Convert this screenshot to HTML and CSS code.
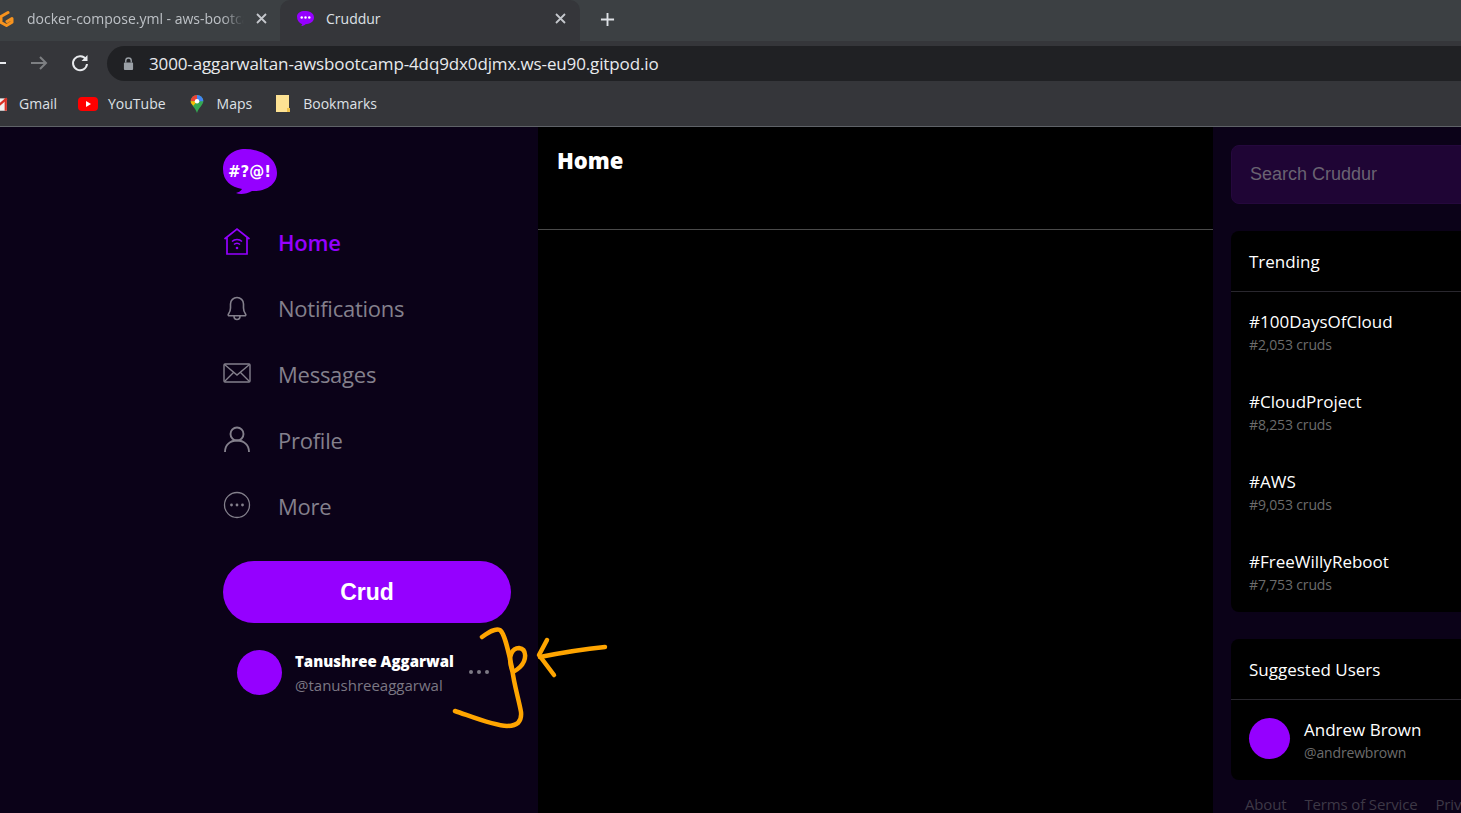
FILE: index.html
```html
<!DOCTYPE html>
<html lang="en">
  <head>
    <meta charset="UTF-8" />
    <meta name="viewport" content="width=device-width, initial-scale=1.0" />
    <title>Cruddur</title>
    <link rel="stylesheet" href="styles.css">
  </head>
  <body>
    <!-- browser chrome -->
    <div class="tabstrip">
      <div class="tab tab-inactive">
        <svg class="favicon" viewBox="0 0 18 20"><path d="M11 3.500 4 7.500v6l5.500 3 5.500-3.200V9.500l-5 3" fill="none" stroke="#f7931e" stroke-width="3" stroke-linecap="round" stroke-linejoin="round"/></svg>
        <span class="tab-title">docker-compose.yml - aws-bootcamp</span>
        <svg class="tab-close" viewBox="0 0 11 11"><path d="M1 1l9 9M10 1l-9 9" stroke="#c4c7cc" stroke-width="1.800" fill="none"/></svg>
      </div>
      <div class="tab tab-active">
        <svg class="favicon" viewBox="0 0 20 18"><path d="M1 7C1 3 5 1 9 1c5 0 10 2 10 7 0 5-5 7-9 7-1 1-3 2-5 2 1-.5 1.500-1 1.500-2C3 14 1 11 1 7Z" fill="#9500ff"/><circle cx="6" cy="8" r="1.300" fill="#fff"/><circle cx="10" cy="8" r="1.300" fill="#fff"/><circle cx="14" cy="8" r="1.300" fill="#fff"/></svg>
        <span class="tab-title">Cruddur</span>
        <svg class="tab-close" viewBox="0 0 11 11"><path d="M1 1l9 9M10 1l-9 9" stroke="#c4c7cc" stroke-width="1.800" fill="none"/></svg>
      </div>
      <svg class="new-tab" viewBox="0 0 16 16"><path d="M8 1v14M1 8h14" stroke="#dee1e6" stroke-width="2" fill="none"/></svg>
    </div>
    <div class="toolbar">
      <svg class="tool-icon tool-back" viewBox="0 0 20 20"><path d="M18 10H3M9 4l-6 6 6 6" fill="none" stroke="#e8eaed" stroke-width="2"/></svg>
      <svg class="tool-icon tool-forward" viewBox="0 0 20 20"><path d="M2 10h15M11 4l6 6-6 6" fill="none" stroke="#7d7f82" stroke-width="2"/></svg>
      <svg class="tool-icon tool-reload" viewBox="0 0 20 20"><path d="M16 6.500A7 7 0 1 0 17 11" fill="none" stroke="#e8eaed" stroke-width="2"/><path d="M17.500 2v6h-6Z" fill="#e8eaed"/></svg>
      <div class="omnibox">
        <svg class="lock" viewBox="0 0 12 14"><path d="M3 6V4a3 3 0 0 1 6 0v2" fill="none" stroke="#9aa0a6" stroke-width="1.500"/><rect x="1" y="6" width="10" height="8" rx="1" fill="#9aa0a6"/></svg>
        <span class="url">3000-aggarwaltan-awsbootcamp-4dq9dx0djmx.ws-eu90.gitpod.io</span>
      </div>
    </div>
    <div class="bookmarks">
      <div class="bookmark bookmark-gmail">
        <svg class="bookmark-icon" viewBox="0 0 16 16"><rect x="1" y="3" width="14" height="11" fill="#f1f1f1"/><path d="M1 3l7 6 7-6" fill="none" stroke="#d93025" stroke-width="2"/><path d="M14 3v11" stroke="#d93025" stroke-width="2"/></svg>
        <span>Gmail</span>
      </div>
      <div class="bookmark">
        <svg class="bookmark-icon" viewBox="0 0 20 16"><rect y="1" width="20" height="14" rx="4" fill="#f00"/><path d="M8 5l5 3-5 3Z" fill="#fff"/></svg>
        <span>YouTube</span>
      </div>
      <div class="bookmark">
        <svg class="bookmark-icon" viewBox="0 0 14 20"><path d="M7 0a7 7 0 0 1 7 7c0 4-5 7-7 13C5 14 0 11 0 7a7 7 0 0 1 7-7Z" fill="#34a853"/><path d="M2 2a7 7 0 0 1 5-2v7H0a7 7 0 0 1 2-5Z" fill="#ea4335"/><path d="M7 0a7 7 0 0 1 7 7H7Z" fill="#4285f4"/><path d="M0 7h7l-4 5C1 10 0 9 0 7Z" fill="#fbbc04"/><circle cx="7" cy="7" r="2.500" fill="#fff"/></svg>
        <span>Maps</span>
      </div>
      <div class="bookmark">
        <svg class="bookmark-icon" viewBox="0 0 14 18"><path d="M0 0h13v13l1 4H0Z" fill="#fde293"/><path d="M11 13h3v4h-3Z" fill="#f0c24b"/></svg>
        <span>Bookmarks</span>
      </div>
    </div>

    <!-- app -->
    <div class="app">
      <nav class="sidebar">
        <svg class="logo" viewBox="0 0 54 46">
          <path d="M0 20C0 7 11 0 22 0c15 0 32 8 32 24 0 13-14 19-25 18-5 3-12 4-16 2 3-1 5-2 6-4C8 38 0 32 0 20Z" fill="#9500ff"/>
          <text x="5" y="28" class="logo-text">#?@!</text>
        </svg>
        <a class="nav-item nav-active">
          <svg class="nav-icon" viewBox="0 0 28 28"><path d="M1.500 12 14 2l12.500 10M4 10.500V27h20V10.500" fill="none" stroke="currentColor" stroke-width="1.700"/><path d="M9 14.500a7 7 0 0 1 10 0M11 17.500a4 4 0 0 1 6 0" fill="none" stroke="currentColor" stroke-width="1.500"/><circle cx="14" cy="21" r="1.300" fill="currentColor"/></svg>
          <span>Home</span>
        </a>
        <a class="nav-item">
          <svg class="nav-icon" viewBox="0 0 28 28"><path d="M5.500 21c1.500-2 2-3.500 2-6v-4a6.500 6.500 0 0 1 13 0v4c0 2.500.5 4 2 6 .7 1 .2 1.800-1 1.800h-15c-1.200 0-1.700-.8-1-1.800ZM11 23c0 2 1.200 3.500 3 3.500s3-1.500 3-3.500" fill="none" stroke="currentColor" stroke-width="1.600"/></svg>
          <span>Notifications</span>
        </a>
        <a class="nav-item">
          <svg class="nav-icon" viewBox="0 0 28 28"><rect x="1" y="5" width="26" height="18" rx="1" fill="none" stroke="currentColor" stroke-width="1.400"/><path d="M1.500 5.500 14 16 26.500 5.500M1.500 22.500l9-9M26.500 22.500l-9-9" fill="none" stroke="currentColor" stroke-width="1.400"/></svg>
          <span>Messages</span>
        </a>
        <a class="nav-item">
          <svg class="nav-icon" viewBox="0 0 28 28"><circle cx="14" cy="9" r="6.500" fill="none" stroke="currentColor" stroke-width="1.900"/><path d="M2 27c0-7 5-11.500 12-11.500S26 20 26 27" fill="none" stroke="currentColor" stroke-width="1.900"/></svg>
          <span>Profile</span>
        </a>
        <a class="nav-item">
          <svg class="nav-icon" viewBox="0 0 28 28"><circle cx="14" cy="14" r="12.500" fill="none" stroke="currentColor" stroke-width="1.300"/><circle cx="8.500" cy="14" r="1.400" fill="currentColor"/><circle cx="14" cy="14" r="1.400" fill="currentColor"/><circle cx="19.500" cy="14" r="1.400" fill="currentColor"/></svg>
          <span>More</span>
        </a>
        <button class="crud-button">Crud</button>
        <div class="profile-info">
          <div class="avatar avatar-large"></div>
          <div class="profile-names">
            <div class="profile-name">Tanushree Aggarwal</div>
            <div class="profile-handle">@tanushreeaggarwal</div>
          </div>
          <div class="profile-more"><i></i><i></i><i></i></div>
        </div>
      </nav>

      <main class="feed">
        <div class="feed-header">
          <h1>Home</h1>
        </div>
      </main>

      <aside class="rail">
        <input class="search" type="text" placeholder="Search Cruddur" />
        <section class="card">
          <div class="card-title">Trending</div>
          <div class="trend">
            <div class="trend-name">#100DaysOfCloud</div>
            <div class="trend-count">#2,053 cruds</div>
          </div>
          <div class="trend">
            <div class="trend-name">#CloudProject</div>
            <div class="trend-count">#8,253 cruds</div>
          </div>
          <div class="trend">
            <div class="trend-name">#AWS</div>
            <div class="trend-count">#9,053 cruds</div>
          </div>
          <div class="trend">
            <div class="trend-name">#FreeWillyReboot</div>
            <div class="trend-count">#7,753 cruds</div>
          </div>
        </section>
        <section class="card">
          <div class="card-title">Suggested Users</div>
          <div class="suggested">
            <div class="avatar avatar-small"></div>
            <div>
              <div class="trend-name">Andrew Brown</div>
              <div class="trend-count">@andrewbrown</div>
            </div>
          </div>
        </section>
        <div class="rail-links">
          <span>About</span>
          <span>Terms of Service</span>
          <span>Privacy Policy</span>
        </div>
      </aside>

      <!-- pen marks drawn over the screenshot -->
      <svg class="scribble" viewBox="0 0 1461 813">
        <path d="M482 637C489 632 495 628 500 630 505 634 508 650 512 668 514 685 519 700 521 712 522 722 517 726 507 726 494 726 470 716 455 711" />
        <path d="M512 670C507 655 513 648 519 648 527 649 527 660 520 667 517 670 515 671 513 672" />
        <path d="M605 647C585 649 560 653 540 657" />
        <path d="M547 640 539 655 554 675" />
      </svg>
    </div>
  </body>
</html>
```

FILE: styles.css
```css
* {
  box-sizing: border-box;
}

html,
body {
  height: 100%;
}

body {
  margin: 0;
  font-family: "Open Sans", "Noto Sans", sans-serif;
  background-color: #0b0218;
  color: #fff;
  overflow: hidden;
  display: flex;
  flex-direction: column;
}

/* browser chrome */

.tabstrip {
  height: 41px;
  flex: none;
  display: flex;
  align-items: flex-end;
  background-color: #3c4043;
  overflow: hidden;
}

.tab {
  height: 41px;
  padding-bottom: 4px;
  display: flex;
  align-items: center;
  font-size: 14px;
  color: #bdc1c6;
  flex: none;
}

.tab-inactive {
  width: 280px;
  padding-right: 13px;
  gap: 12px;
}

.tab-active {
  width: 300px;
  padding-left: 16px;
  padding-right: 14px;
  gap: 11px;
  background-color: #35363a;
  color: #dee1e6;
  border-radius: 10px 10px 0 0;
}

.favicon {
  width: 19px;
  height: 17px;
  flex: none;
}

.tab-inactive .favicon {
  width: 18px;
  height: 20px;
  margin-left: -3px;
}

.tab-title {
  flex: 1;
  min-width: 0;
  white-space: nowrap;
  overflow: hidden;
}

.tab-inactive .tab-title {
  -webkit-mask-image: linear-gradient(to right, #000 90%, transparent);
  mask-image: linear-gradient(to right, #000 90%, transparent);
}

.tab-close {
  width: 11px;
  height: 11px;
  flex: none;
}

.new-tab {
  width: 15px;
  height: 15px;
  margin: 0 0 14px 20px;
}

.toolbar {
  height: 44px;
  flex: none;
  display: flex;
  align-items: center;
  background-color: #35363a;
  overflow: hidden;
}

.tool-icon {
  width: 20px;
  height: 20px;
  flex: none;
}

.tool-back {
  margin-left: -12px;
}

.tool-forward {
  margin-left: 21px;
}

.tool-reload {
  margin-left: 21px;
}

.omnibox {
  flex: 1;
  height: 35px;
  margin-left: 17px;
  margin-right: -40px;
  padding-left: 16px;
  display: flex;
  align-items: center;
  gap: 15px;
  background-color: #202124;
  border-radius: 18px;
}

.lock {
  width: 11px;
  height: 13px;
}

.url {
  font-size: 17px;
  letter-spacing: -0.13px;
  color: #e8eaed;
}

.bookmarks {
  height: 42px;
  flex: none;
  padding-bottom: 4px;
  display: flex;
  align-items: center;
  background-color: #35363a;
  border-bottom: 1px solid #5f6368;
  font-size: 14px;
  color: #dee1e6;
  overflow: hidden;
}

.bookmark {
  display: flex;
  align-items: center;
  gap: 10px;
  margin-right: 21px;
}

.bookmark-gmail {
  margin-left: -11px;
}

.bookmark-icon {
  height: 18px;
  width: 20px;
}

/* app */

.app {
  flex: 1;
  position: relative;
  min-height: 0;
  display: grid;
  grid-template-columns: 538px 675px 1fr;
  overflow: hidden;
}

.sidebar {
  padding: 22px 27px 0 223px;
  display: flex;
  flex-direction: column;
}

.logo {
  width: 54px;
  height: 46px;
  margin-bottom: 14px;
  flex: none;
}

.logo-text {
  font-family: "DejaVu Sans", sans-serif;
  font-size: 15px;
  font-weight: 700;
  fill: #fff;
}

.nav-item {
  height: 66px;
  display: flex;
  align-items: center;
  gap: 27px;
  font-size: 22px;
  letter-spacing: -0.25px;
  color: #84808c;
}

.nav-icon {
  width: 28px;
  height: 28px;
  margin-bottom: 3px;
  flex: none;
}

.nav-active {
  color: #9500ff;
  font-weight: 600;
}

.crud-button {
  height: 62px;
  margin-top: 22px;
  border: none;
  border-radius: 31px;
  background-color: #9500ff;
  color: #fff;
  font-family: "Liberation Sans", sans-serif;
  font-size: 23px;
  font-weight: 700;
}

.profile-info {
  display: flex;
  align-items: center;
  margin-top: 24px;
  padding-left: 14px;
}

.avatar {
  border-radius: 50%;
  background-color: #9500ff;
  flex: none;
}

.avatar-large {
  width: 45px;
  height: 45px;
  margin-right: 13px;
}

.profile-names {
  width: 174px;
  padding-top: 2px;
}

.profile-name {
  font-size: 15px;
  font-weight: 800;
  line-height: 24px;
}

.profile-handle {
  font-size: 15px;
  color: #7b7783;
  line-height: 24px;
}

.profile-more {
  display: flex;
  gap: 4px;
}

.profile-more i {
  width: 4px;
  height: 4px;
  border-radius: 50%;
  background-color: #7d7985;
}

.feed {
  background-color: #000;
}

.feed-header {
  height: 103px;
  padding: 18px 19px 0;
  border-bottom: 1px solid #4a4a4a;
}

.feed-header h1 {
  margin: 0;
  font-size: 22px;
  font-weight: 800;
  line-height: 30px;
}

.rail {
  padding: 18px 0 0 18px;
  display: flex;
  flex-direction: column;
  min-width: 0;
}

.search {
  width: 260px;
  height: 59px;
  flex: none;
  padding: 0 18px;
  border: 1px solid #25083d;
  border-radius: 8px 0 0 8px;
  background-color: #1f0535;
  font-family: "Liberation Sans", sans-serif;
  font-size: 18px;
  outline: none;
}

.search::placeholder {
  color: #6a6372;
}

.card {
  flex: none;
  width: 260px;
  margin-top: 27px;
  background-color: #000;
  border-radius: 8px 0 0 8px;
}

.card-title {
  height: 61px;
  padding: 0 18px;
  display: flex;
  align-items: center;
  border-bottom: 1px solid #29272e;
  font-size: 17px;
}

.trend {
  height: 80px;
  padding: 17px 18px 0;
}

.trend-name {
  font-size: 17px;
  line-height: 26px;
  white-space: nowrap;
}

.trend-count {
  font-size: 14px;
  line-height: 20px;
  letter-spacing: -0.15px;
  color: #6c6c6c;
}

.suggested {
  height: 80px;
  padding: 0 18px;
  display: flex;
  align-items: center;
  gap: 14px;
}

.avatar-small {
  width: 41px;
  height: 41px;
  margin-bottom: 4px;
}

.rail-links {
  margin-top: 14px;
  padding-left: 14px;
  display: flex;
  gap: 18px;
  white-space: nowrap;
  font-size: 15px;
  letter-spacing: -0.15px;
  color: #3d3846;
}

.scribble {
  position: absolute;
  left: 0;
  top: -127px;
  width: 1461px;
  height: 813px;
  pointer-events: none;
}

.scribble path {
  fill: none;
  stroke: #ffa500;
  stroke-width: 4.500;
  stroke-linecap: round;
  stroke-linejoin: round;
}
```
